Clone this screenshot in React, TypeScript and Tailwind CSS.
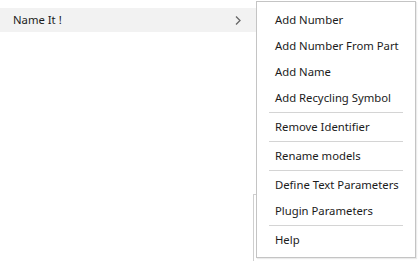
import React from "react";

const Sep = () => <div className="mx-3 my-px h-px bg-[#d4d4d4]" />;

const Item = ({ label }: { label: string }) => (
  <div className="flex h-[26px] items-center pt-px pl-[18px] text-[11.3px] text-[#1b1b1b]">{label}</div>
);

export default function App() {
  return (
    <div
      className="relative h-[261px] w-[418px] bg-white"
      style={{ fontFamily: '"Noto Sans", "Open Sans", sans-serif' }}
    >
      <div className="pt-2">
        <div className="flex h-6 w-[256px] items-center justify-between bg-[#f2f2f2] pl-[13px] pr-[15px] text-[11.3px] text-[#1b1b1b]">
          <span>Name It !</span>
          <svg width="6" height="9" viewBox="0 0 6 9" className="text-[#666]">
            <path d="M1 0.5 L5 4.5 L1 8.5" fill="none" stroke="currentColor" strokeWidth="1.3" />
          </svg>
        </div>
      </div>
      <div className="absolute left-[253px] top-[194px] h-[67px] w-[3px] border-l border-t border-[#cfcfcf]" />
      <div className="absolute left-[256px] top-px w-[160px] border border-[#c4c4c4] bg-white pt-[5px] pb-[4px] shadow-[1px_1px_1px_rgba(0,0,0,0.08)]">
        <Item label="Add Number" />
        <Item label="Add Number From Part" />
        <Item label="Add Name" />
        <Item label="Add Recycling Symbol" />
        <Sep />
        <Item label="Remove Identifier" />
        <Sep />
        <Item label="Rename models" />
        <Sep />
        <Item label="Define Text Parameters" />
        <Item label="Plugin Parameters" />
        <Sep />
        <Item label="Help" />
      </div>
    </div>
  );
}
